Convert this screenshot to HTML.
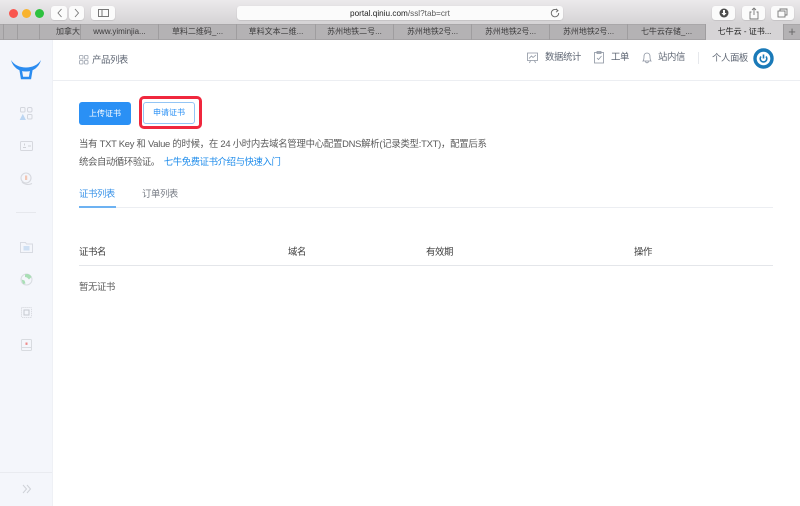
<!DOCTYPE html>
<html lang="zh">
<head>
<meta charset="utf-8">
<title>七牛云 - 证书管理</title>
<style>
*{margin:0;padding:0;box-sizing:border-box}
html,body{width:800px;height:506px;overflow:hidden;background:#fff}
body{font-family:"Liberation Sans","Noto Sans CJK SC",sans-serif;position:relative}
#w{position:absolute;left:0;top:0;width:800px;height:506px;filter:blur(.35px);overflow:hidden}
.a{position:absolute;white-space:nowrap}
svg{position:absolute;overflow:visible}
#bar{left:0;top:0;width:800px;height:24px;background:linear-gradient(#ebe9eb,#d5d3d5)}
.d{width:9px;height:9px;border-radius:50%;top:8.500px}
.b{top:6px;height:14px;background:#fbfbfb;border-radius:3px;box-shadow:0 .5px 1px #b5b3b5}
#tabs{left:0;top:24px;width:800px;height:16px;background:#b4b2b4;border-top:1px solid #a9a7a9;border-bottom:1px solid #a5a3a5}
.t{top:24px;height:16px;border-left:1px solid #9f9d9f;font-size:8px;line-height:16px;text-align:center;color:#3d3c3d;overflow:hidden}
#side{left:0;top:40px;width:53px;height:466px;background:#f4f6fb;border-right:1px solid #eef0f5}
.n{font-size:9.400px;letter-spacing:-.4px;color:#5f6774;line-height:14px}
.h{font-size:9.400px;letter-spacing:-.4px;line-height:14px;color:#3c3c3c}
</style>
</head>
<body>
<div id="w">
<div class="a" id="bar"></div>
<div class="a d" style="left:8.500px;background:#f9564f"></div>
<div class="a d" style="left:21.500px;background:#f8b32e"></div>
<div class="a d" style="left:34.500px;background:#2ec13f"></div>
<div class="a b" style="left:51px;width:16px"></div>
<div class="a b" style="left:69px;width:15px"></div>
<svg style="left:0;top:0" width="120" height="24" fill="none" stroke="#777" stroke-width=".9"><path d="M61.500 9l-3.500 4 3.500 4M75 9l3.500 4-3.500 4"/></svg>
<div class="a b" style="left:91px;width:24px"></div>
<svg style="left:0;top:0" width="120" height="24" fill="none" stroke="#777" stroke-width="1"><rect x="98.500" y="9.500" width="10" height="7"/><path d="M102 9.500v7"/></svg>
<div class="a b" style="left:237px;width:326px;top:6px"></div>
<div class="a" style="left:237px;width:326px;top:7px;text-align:center;font-size:8.200px;line-height:13px;color:#5a5a5a"><span style="color:#222">portal.qiniu.com</span>/ssl?tab=crt</div>
<svg style="left:550px;top:8px" width="10" height="10" fill="none" stroke="#666" stroke-width=".9"><path d="M7.800 2.700A3.700 3.700 0 1 0 8.700 5"/><path d="M6 .8l2 1.900-2 1.500" /></svg>
<div class="a b" style="left:712px;width:23px"></div>
<svg style="left:719px;top:8px" width="10" height="10"><circle cx="5" cy="5" r="4.500" fill="#4d4d4d"/><path d="M4 2h2v3h1.600L5 7.800 2.400 5H4z" fill="#fff"/></svg>
<div class="a b" style="left:742px;width:23px"></div>
<svg style="left:748px;top:7px" width="12" height="12" fill="none" stroke="#777" stroke-width=".9"><path d="M3.500 5H2v7h8V5H8.500M6 8V1M4 3l2-2 2 2"/></svg>
<div class="a b" style="left:771px;width:23px"></div>
<svg style="left:777px;top:8px" width="12" height="10" fill="none" stroke="#777" stroke-width=".9"><rect x="1" y="3" width="7" height="6"/><path d="M3 3V1h7v6H8"/></svg>
<div class="a" id="tabs"></div>
<div class="a t" style="left:3px;width:14px"></div>
<div class="a t" style="left:17px;width:22px"></div>
<div class="a t" style="left:39px;width:41px;text-align:left;padding-left:16px">加拿大 d</div>
<div class="a t" style="left:80px;width:78px">www.yiminjia...</div>
<div class="a t" style="left:158px;width:78px">草料二维码_...</div>
<div class="a t" style="left:236px;width:79px">草料文本二维...</div>
<div class="a t" style="left:315px;width:78px">苏州地铁二号...</div>
<div class="a t" style="left:393px;width:78px">苏州地铁2号...</div>
<div class="a t" style="left:471px;width:78px">苏州地铁2号...</div>
<div class="a t" style="left:549px;width:78px">苏州地铁2号...</div>
<div class="a t" style="left:627px;width:78px">七牛云存储_...</div>
<div class="a t" style="left:705px;width:78px;background:#d6d4d6;color:#222">七牛云 - 证书...</div>
<div class="a t" style="left:783px;width:17px;font-size:13px;color:#666;line-height:15px">+</div>

<div class="a" id="side"></div>
<svg style="left:0;top:0" width="52" height="90"><path d="M11 60C14 65 20 67.500 26 67.500S38 65 41 60C39 67.500 33 71.500 26 71.500S13 67.500 11 60z" fill="#2b8cf0"/><path d="M20.500 69l1.500 9h8l1.500-9" fill="none" stroke="#2b8cf0" stroke-width="2.500"/></svg>
<svg style="left:20px;top:107px" width="13" height="13" fill="none" stroke="#d3d6dd" stroke-width="1"><rect x=".5" y=".5" width="4.500" height="4.500" rx="1"/><rect x="7.500" y=".5" width="4.500" height="4.500" rx="1.500"/><rect x="7.500" y="7.500" width="4.500" height="4.500" rx="1"/><path d="M.5 12.500l2.300-4.500 2.300 4.500z" fill="#bcd6f2" stroke="#bcd6f2"/></svg>
<svg style="left:20px;top:140px" width="13" height="12" fill="none" stroke="#d6d8de" stroke-width="1"><rect x=".5" y="1.500" width="12" height="9" rx="1"/><path d="M3 7.500h3M4.500 3.500v2M8 6h3" stroke="#cfd1d6"/></svg>
<svg style="left:20px;top:172px" width="13" height="14" fill="none" stroke="#d6d8de" stroke-width="1.100"><circle cx="6" cy="6" r="5"/><path d="M2 10c3 3 7 3 10 1.500"/><rect x="5" y="3.500" width="2.200" height="4.500" fill="#f2c7b5" stroke="none"/></svg>
<div class="a" style="left:16px;top:212px;width:20px;height:1px;background:#e6e8ed"></div>
<svg style="left:20px;top:241px" width="13" height="12" fill="none" stroke="#d8dbe2" stroke-width="1"><path d="M.5 11.500V1.500h5l1 1.500h6v8.500z"/><rect x="3.500" y="5" width="6" height="4.500" fill="#cfe0f3" stroke="none"/></svg>
<svg style="left:20px;top:273px" width="13" height="13" fill="none"><circle cx="6.500" cy="6.500" r="5.500" stroke="#d8dbe0"/><path d="M5 1.500c2-1 5-.5 6.500 2.500L9 6.500 7 4.500 5 4zM1.500 6.500l3 1 1 3-2.500.5z" fill="#a9deb5"/></svg>
<svg style="left:20px;top:306px" width="13" height="13" fill="none" stroke="#d6d8de"><rect x="1.500" y="1.500" width="10" height="10" rx="1" stroke-dasharray="1.200 .8"/><rect x="4" y="4" width="5" height="5" stroke="#c5c8cf"/></svg>
<svg style="left:21px;top:339px" width="11" height="12" fill="none" stroke="#d8dbe0"><rect x=".5" y=".5" width="10" height="11" rx="1"/><path d="M.5 8.500h10"/><rect x="4.500" y="3.500" width="2" height="2.400" fill="#ee8a8a" stroke="none"/></svg>
<div class="a" style="left:0;top:472px;width:52px;height:1px;background:#e9ebf0"></div>
<svg style="left:22px;top:484px" width="10" height="10" fill="none" stroke="#cfd2d8" stroke-width="1"><path d="M1 1l3.500 4L1 9M5 1l3.500 4L5 9"/></svg>

<div class="a" style="left:53px;top:80px;width:747px;height:1px;background:#eceef2"></div>
<svg style="left:79px;top:55px" width="10" height="10" fill="none" stroke="#9aa1ad" stroke-width=".8"><rect x=".5" y=".5" width="3.500" height="3.500" rx=".6"/><rect x="5.500" y=".5" width="3.500" height="3.500" rx=".6"/><rect x=".5" y="5.500" width="3.500" height="3.500" rx=".6"/><rect x="5.500" y="5.500" width="3.500" height="3.500" rx=".6"/></svg>
<div class="a n" style="left:92px;top:53px">产品列表</div>

<svg style="left:527px;top:52px" width="12" height="12" fill="none" stroke="#8c94a1" stroke-width=".8"><path d="M.5 1h10v7.500H.5zM2 6.500L4.500 4 6 5.500 9 3M3.500 8.500l-1 2.500M7.500 8.500l1 2.500"/></svg>
<div class="a n" style="left:545px;top:50px">数据统计</div>
<svg style="left:594px;top:51px" width="11" height="13" fill="none" stroke="#8c94a1" stroke-width=".8"><rect x=".5" y="1.500" width="9" height="10.500"/><rect x="3" y=".5" width="4" height="2"/><path d="M3 7l1.500 1.500L7.500 5"/></svg>
<div class="a n" style="left:611px;top:50px">工单</div>
<svg style="left:642px;top:52px" width="10" height="12" fill="none" stroke="#8c94a1" stroke-width=".8"><path d="M1 9c1-1 1-2 1-4.500S3.500 1 5 1s3 1 3 3.500S8 8 9 9zM3.500 9.500c.5 1.800 2.500 1.800 3 0"/></svg>
<div class="a n" style="left:658px;top:50px">站内信</div>
<div class="a" style="left:698px;top:52px;width:1px;height:12px;background:#e6e8ec"></div>
<div class="a n" style="left:712px;top:51px">个人面板</div>
<svg style="left:753px;top:48px" width="21" height="21" fill="none"><circle cx="10.500" cy="10.500" r="8.500" stroke="#1a7ab8" stroke-width="3.400"/><path d="M8 8.500a3.300 3.300 0 1 0 5 0" stroke="#1a7ab8" stroke-width="1.600"/><path d="M10.500 6.500v4" stroke="#1a7ab8" stroke-width="1.600"/></svg>

<div class="a" style="left:79px;top:102px;width:52px;height:23px;background:#2a90f5;border-radius:3px;color:#fff;font-size:8px;line-height:23px;text-align:center">上传证书</div>
<div class="a" style="left:139px;top:96px;width:63px;height:33px;border:3px solid #f0273d;border-radius:5px"></div>
<div class="a" style="left:143px;top:102px;width:52px;height:22px;background:#fff;border:1px solid #93c5f5;border-radius:3px;color:#2a90f5;font-size:8px;line-height:20px;text-align:center">申请证书</div>

<div class="a" style="left:79px;top:137px;font-size:9.400px;line-height:14px;color:#5a5a5a;letter-spacing:-.25px">当有 TXT Key 和 Value 的时候，在 24 小时内去域名管理中心配置DNS解析(记录类型:TXT)，配置后系</div>
<div class="a" style="left:79px;top:155px;font-size:9.400px;line-height:14px;color:#5a5a5a;letter-spacing:-.4px">统会自动循环验证。<span style="color:#1f8ceb;margin-left:4px">七牛免费证书介绍与快速入门</span></div>

<div class="a" style="left:79px;top:187px;font-size:9.400px;letter-spacing:-.4px;line-height:14px;color:#3a93e8">证书列表</div>
<div class="a" style="left:142px;top:187px;font-size:9.400px;letter-spacing:-.4px;line-height:14px;color:#787d86">订单列表</div>
<div class="a" style="left:79px;top:207px;width:694px;height:1px;background:#eceef2"></div>
<div class="a" style="left:79px;top:206px;width:37px;height:2px;background:#6db2f2"></div>

<div class="a h" style="left:79px;top:245px">证书名</div>
<div class="a h" style="left:288px;top:245px">域名</div>
<div class="a h" style="left:426px;top:245px">有效期</div>
<div class="a h" style="left:634px;top:245px">操作</div>
<div class="a" style="left:79px;top:265px;width:694px;height:1px;background:#e4e6ea"></div>
<div class="a" style="left:79px;top:280px;font-size:9.400px;letter-spacing:-.4px;line-height:14px;color:#5a5a5a">暂无证书</div>
</div>
</body>
</html>
